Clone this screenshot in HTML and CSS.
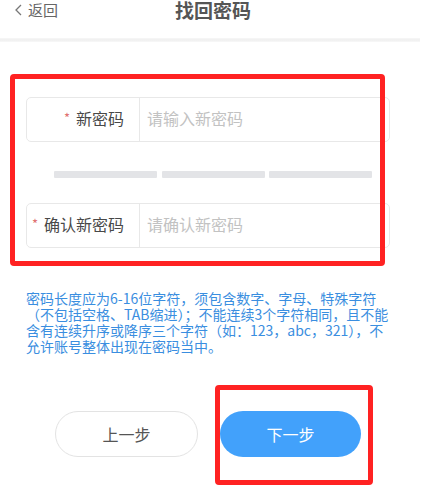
FILE: index.html
```html
<!DOCTYPE html>
<html lang="zh">
<head>
<meta charset="utf-8">
<title>找回密码</title>
<link rel="stylesheet" href="styles.css">
</head>
<body>
<div class="page">
  <div class="header">
    <div class="back">
      <svg class="chev" width="9" height="12" viewBox="0 0 9 12"><path d="M7 1 L2 6 L7 11" fill="none" stroke="#777" stroke-width="1.3"/></svg>
      <span>返回</span>
    </div>
    <div class="title">找回密码</div>
    <div></div>
  </div>
  <div class="divider"></div>

  <div class="form">
    <div class="field">
      <div class="label"><span class="star">*</span>新密码</div>
      <input class="input" type="password" placeholder="请输入新密码">
    </div>
    <div class="strength">
      <div class="bar"></div>
      <div class="bar"></div>
      <div class="bar"></div>
    </div>
    <div class="field field-second">
      <div class="label"><span class="star">*</span>确认新密码</div>
      <input class="input" type="password" placeholder="请确认新密码">
    </div>
  </div>

  <p class="hint">密码长度应为6-16位字符，须包含数字、字母、特殊字符<br>（不包括空格、TAB缩进）；不能连续3个字符相同，且不能<br>含有连续升序或降序三个字符（如：123，abc，321），不<br>允许账号整体出现在密码当中。</p>

  <div class="actions">
    <button class="btn btn-prev">上一步</button>
    <button class="btn btn-next">下一步</button>
  </div>

  <div class="mark mark-form"></div>
  <div class="mark mark-next"></div>
</div>
</body>
</html>
```

FILE: styles.css
```css
html, body {
  margin: 0;
  padding: 0;
  background: #ffffff;
}

body {
  font-family: "Noto Sans CJK SC", "Noto Sans", sans-serif;
  color: #444;
}

.page {
  position: relative;
  width: 445px;
  height: 497px;
  overflow: hidden;
}

.header {
  width: 426px;
  height: 38px;
  display: grid;
  grid-template-columns: 1fr auto 1fr;
  align-items: start;
}

.back {
  display: flex;
  align-items: center;
  padding-left: 14px;
  height: 20px;
  font-size: 15px;
  line-height: 20px;
  color: #666;
}

.chev {
  margin-right: 5px;
}

.title {
  font-size: 19px;
  line-height: 19px;
  font-weight: 700;
  color: #555;
}

.divider {
  width: 420px;
  height: 4px;
  background: linear-gradient(#f7f7f7, #efefef 50%, #f8f8f8);
}

.form {
  margin-top: 55px;
  margin-left: 26px;
  width: 364px;
}

.field {
  display: flex;
  height: 45px;
  border: 1px solid #e8e8e8;
  border-radius: 5px;
  box-sizing: border-box;
}

.field-second {
  margin-top: 25px;
}

.label {
  width: 113px;
  flex: none;
  border-right: 1px solid #e8e8e8;
  display: flex;
  align-items: center;
  justify-content: flex-end;
  padding: 0 15px 3px 0;
  box-sizing: border-box;
  font-size: 16px;
  color: #484848;
}

.star {
  color: #e07070;
  font-size: 13px;
  margin-right: 6px;
  position: relative;
  top: -1px;
}

.input {
  flex: 1;
  min-width: 0;
  border: none;
  outline: none;
  background: transparent;
  padding: 0 0 3px 7px;
  font-family: "Noto Sans CJK SC", "Noto Sans", sans-serif;
  font-size: 16px;
  color: #333;
}

.input::placeholder {
  color: #c2c2c2;
}

.strength {
  margin: 29px 0 0 28px;
  width: 318px;
  display: grid;
  grid-template-columns: repeat(3, 1fr);
  gap: 4.5px;
}

.bar {
  height: 7px;
  background: #e3e4e7;
  border-radius: 1px;
}

.hint {
  margin: 42px 0 0 26px;
  width: 380px;
  font-size: 14px;
  line-height: 16px;
  color: #3a8ee0;
  white-space: nowrap;
}

.actions {
  margin: 57px 0 0 55px;
  display: flex;
  gap: 22px;
}

.btn {
  width: 143px;
  height: 46px;
  border-radius: 23px;
  font-family: "Noto Sans CJK SC", "Noto Sans", sans-serif;
  font-size: 16px;
  box-sizing: border-box;
  padding-bottom: 2px;
  cursor: pointer;
}

.btn-prev {
  background: #fff;
  border: 1px solid #e3e3e3;
  color: #555;
}

.btn-next {
  width: 141px;
  background: #42a1fb;
  border: none;
  color: #fff;
}

.mark {
  position: absolute;
  border: 5px solid #ff2222;
  border-radius: 4px;
  box-sizing: border-box;
  pointer-events: none;
}

.mark-form {
  left: 10px;
  top: 74px;
  width: 375px;
  height: 192px;
}

.mark-next {
  left: 215px;
  top: 385px;
  width: 158px;
  height: 100px;
}
```
